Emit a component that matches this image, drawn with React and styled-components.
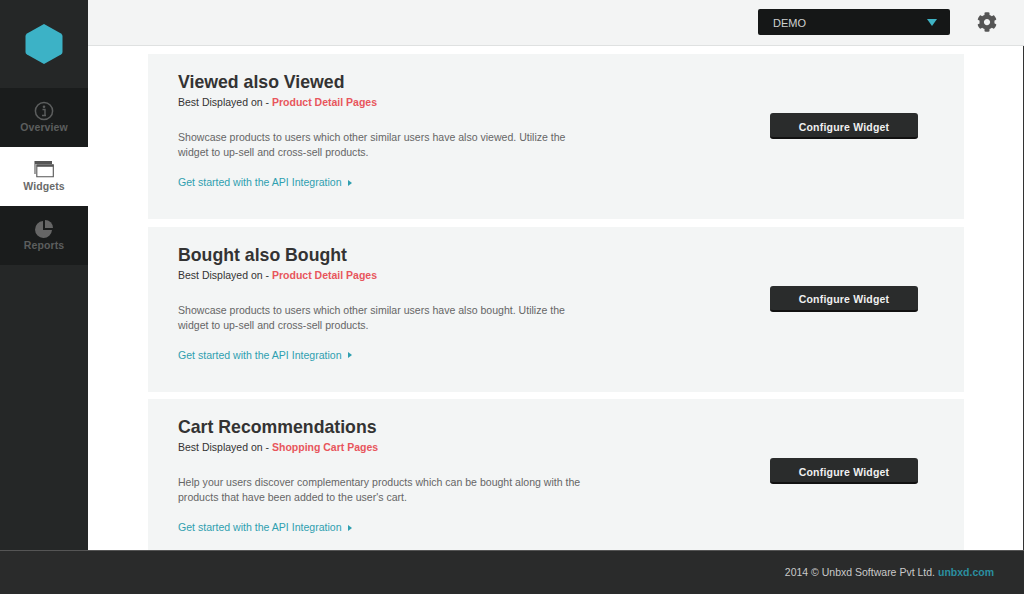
import styled, { createGlobalStyle } from "styled-components";
import { FaCog } from "react-icons/fa";

const Global = createGlobalStyle`
    html, body { margin: 0; padding: 0; height: 100%; overflow: hidden; }
    body { font-family: "Liberation Sans", Arial, sans-serif; background: #fff; }
    * { box-sizing: border-box; }
`;

const Page = styled.div`
    width: 1024px;
    height: 594px;
    display: grid;
    grid-template-columns: 88px 1fr;
    grid-template-rows: 550px 44px;
`;
const Sidebar = styled.nav`
    background: #252727;
    display: flex;
    flex-direction: column;
`;
const LogoBox = styled.div`
    height: 88px;
    display: flex;
    align-items: center;
    justify-content: center;
`;
const NavItem = styled.a`
    height: 59px;
    background: ${(p) => (p.$active ? "#fff" : "#1a1c1c")};
    color: ${(p) => (p.$active ? "#6a6a6a" : "#5c5e5e")};
    display: flex;
    flex-direction: column;
    align-items: center;
    padding-top: 13px;
    font-size: 10.5px;
    font-weight: bold;
    letter-spacing: 0.1px;
    line-height: 13px;
`;
const Main = styled.div`
    display: flex;
    flex-direction: column;
    min-height: 0;
    border-right: 1px solid #333;
`;
const Header = styled.header`
    height: 46px;
    flex: none;
    background: #f3f4f4;
    border-bottom: 1px solid #dfe1e1;
    display: flex;
    align-items: center;
    justify-content: flex-end;
    padding: 0 27px 1px 0;
    gap: 27px;
    margin-right: -1px;
`;
const Select = styled.div`
    width: 192px;
    height: 26px;
    background: #151717;
    border-radius: 2px;
    color: #cfd1d1;
    font-size: 11px;
    display: flex;
    align-items: center;
    justify-content: space-between;
    padding: 1px 13px 0 15px;
`;
const Caret = styled.span`
    width: 0;
    height: 0;
    border-left: 5px solid transparent;
    border-right: 5px solid transparent;
    border-top: 7px solid #3eb3c4;
`;
const Gear = styled(FaCog)`
    width: 20px;
    height: 20px;
    color: #555;
`;
const Content = styled.main`
    flex: 1;
    min-height: 0;
    overflow: hidden;
    padding: 8px 59px 0 60px;
    display: flex;
    flex-direction: column;
    gap: 7.5px;
`;
const Card = styled.section`
    flex: none;
    height: 165px;
    background: #f3f5f5;
    padding: 17px 46px 0 30px;
    display: flex;
    align-items: flex-start;
    justify-content: space-between;
`;
const Info = styled.div`
    width: 412px;
`;
const Title = styled.h2`
    margin: 0 0 1px;
    font-size: 17.7px;
    line-height: 22px;
    font-weight: bold;
    color: #333;
`;
const Sub = styled.p`
    margin: 0;
    font-size: 10.5px;
    line-height: 16px;
    color: #333;
`;
const Red = styled.strong`
    color: #e8555c;
`;
const Desc = styled.p`
    margin: 20px 0 0;
    font-size: 10.55px;
    line-height: 15px;
    color: #666;
`;
const ApiLink = styled.a`
    display: flex;
    align-items: center;
    gap: 6px;
    margin-top: 15px;
    font-size: 10.55px;
    line-height: 15px;
    color: #2f9fb0;
`;
const LinkArrow = styled.span`
    width: 0;
    height: 0;
    border-top: 3px solid transparent;
    border-bottom: 3px solid transparent;
    border-left: 4px solid #2f9fb0;
`;
const Button = styled.button`
    width: 148px;
    height: 26px;
    margin-top: 42px;
    padding: 3px 0 0;
    border: 0;
    border-bottom: 2px solid #111;
    border-radius: 3px;
    background: #2a2c2c;
    color: #f0f0f0;
    font: bold 10.5px "Liberation Sans", Arial, sans-serif;
    letter-spacing: 0.2px;
`;
const Footer = styled.footer`
    grid-column: 1 / -1;
    background: #2a2b2b;
    border-top: 1px solid #555;
    color: #c9c9c9;
    font-size: 10.5px;
    display: flex;
    align-items: center;
    justify-content: flex-end;
    padding: 0 30px 1px 0;
    gap: 3px;
`;
const FootLink = styled.a`
    color: #2a8fa0;
    font-weight: bold;
`;

const widgets = [
    {
        title: "Viewed also Viewed",
        page: "Product Detail Pages",
        desc: ["Showcase products to users which other similar users have also viewed. Utilize the", "widget to up-sell and cross-sell products."],
    },
    {
        title: "Bought also Bought",
        page: "Product Detail Pages",
        desc: ["Showcase products to users which other similar users have also bought. Utilize the", "widget to up-sell and cross-sell products."],
    },
    {
        title: "Cart Recommendations",
        page: "Shopping Cart Pages",
        desc: ["Help your users discover complementary products which can be bought along with the", "products that have been added to the user's cart."],
    },
];

const App = () => {
    return (
        <Page>
            <Global />
            <Sidebar>
                <LogoBox>
                    <svg width="38" height="42" viewBox="0 0 38 42">
                        <path d="M19 1 L36 10.500 Q37.500 11.500 37.500 13 L37.500 29 Q37.500 30.500 36 31.500 L19 41 L2 31.500 Q0.500 30.500 0.500 29 L0.500 13 Q0.500 11.500 2 10.500 Z" fill="#3cb2c6" />
                    </svg>
                </LogoBox>
                <NavItem>
                    <svg width="20" height="20" viewBox="0 0 20 20" fill="none">
                        <circle cx="10" cy="10" r="8.600" stroke="#5c5e5e" strokeWidth="1.500" />
                        <circle cx="10" cy="5.800" r="1.300" fill="#5c5e5e" />
                        <path d="M8.500 8.500h2.500v6h1M8 14.500h4" stroke="#5c5e5e" strokeWidth="1.400" />
                    </svg>
                    Overview
                </NavItem>
                <NavItem $active>
                    <svg width="20" height="20" viewBox="0 0 20 20" fill="none">
                        <path d="M1 1h17v3H1z" fill="#555" />
                        <path d="M1 1v13M2.800 4.800h16.500v12H2.800z" stroke="#555" strokeWidth="1.100" />
                        <path d="M2.800 4.800h16.500v2H2.800z" fill="#555" />
                    </svg>
                    Widgets
                </NavItem>
                <NavItem>
                    <svg width="20" height="20" viewBox="0 0 20 20">
                        <path d="M9 2a8.500 8.500 0 1 0 9 9H9z" fill="#666" />
                        <path d="M11 1v8h8a8 8 0 0 0-8-8z" fill="#666" />
                    </svg>
                    Reports
                </NavItem>
            </Sidebar>
            <Main>
                <Header>
                    <Select>
                        DEMO
                        <Caret />
                    </Select>
                    <Gear />
                </Header>
                <Content>
                    {widgets.map((w) => (
                        <Card key={w.title}>
                            <Info>
                                <Title>{w.title}</Title>
                                <Sub>Best Displayed on - <Red>{w.page}</Red></Sub>
                                <Desc>{w.desc[0]}<br />{w.desc[1]}</Desc>
                                <ApiLink>Get started with the API Integration <LinkArrow /></ApiLink>
                            </Info>
                            <Button>Configure Widget</Button>
                        </Card>
                    ))}
                </Content>
            </Main>
            <Footer>
                2014 © Unbxd Software Pvt Ltd. <FootLink>unbxd.com</FootLink>
            </Footer>
        </Page>
    );
};

export default App;
